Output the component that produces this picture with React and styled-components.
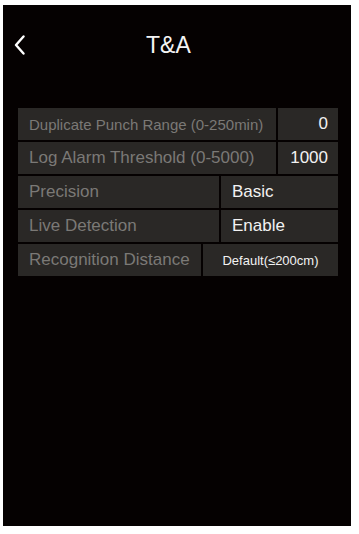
import React from "react";
import styled, { createGlobalStyle } from "styled-components";

const Global = createGlobalStyle`
  html, body {
    margin: 0;
    padding: 0;
    background: #ffffff;
  }
  body {
    font-family: "Liberation Sans", Arial, Helvetica, sans-serif;
  }
`;

const Screen = styled.div`
  margin: 5px 0 0 3px;
  width: 348px;
  height: 521px;
  background: #050101;
  display: flex;
  flex-direction: column;
`;

const Header = styled.div`
  height: 80px;
  display: flex;
  align-items: center;
  padding: 0 0 0 11px;
`;

const Back = styled.button`
  background: none;
  border: 0;
  padding: 0;
  width: 12px;
  height: 20px;
  display: flex;
  align-items: center;
  cursor: pointer;
  svg {
    width: 11px;
    height: 20px;
  }
`;

const Title = styled.h1`
  margin: 0 0 0 120px;
  font-size: 23px;
  font-weight: normal;
  color: #f4f4f4;
`;

const Table = styled.div`
  margin: 23px 0 0 15px;
  width: 320px;
  display: flex;
  flex-direction: column;
  gap: 2px;
`;

const Row = styled.div`
  display: grid;
  grid-template-columns: ${(p) => p.$label}px 1fr;
  gap: 2px;
  height: 32px;
`;

const Cell = styled.div`
  background: #2a2826;
  display: flex;
  align-items: center;
  white-space: nowrap;
  overflow: hidden;
`;

const Label = styled(Cell)`
  padding-left: 11px;
  font-size: ${(p) => p.$size || 17}px;
  color: #7b7976;
`;

const Value = styled(Cell)`
  color: #f2f2f2;
  font-size: ${(p) => (p.$small ? 13 : 17)}px;
  justify-content: ${(p) =>
    p.$align === "right" ? "flex-end" : p.$align === "center" ? "center" : "flex-start"};
  padding: ${(p) => (p.$align === "right" ? "0 10px 0 0" : p.$align === "center" ? "0" : "0 0 0 11px")};
`;

const rows = [
  { label: "Duplicate Punch Range (0-250min)", size: 15, value: "0", w: 258, align: "right" },
  { label: "Log Alarm Threshold (0-5000)", value: "1000", w: 258, align: "right" },
  { label: "Precision", value: "Basic", w: 201, align: "left" },
  { label: "Live Detection", value: "Enable", w: 201, align: "left" },
  { label: "Recognition Distance", value: "Default(≤200cm)", w: 183, align: "center", small: true },
];

export default function App() {
  return (
    <>
      <Global />
      <Screen>
        <Header>
          <Back aria-label="Back">
            <svg viewBox="0 0 11 20" fill="none">
              <path
                d="M9.5 1.5 L2 10 L9.5 18.5"
                stroke="#ffffff"
                strokeWidth="2.4"
                strokeLinecap="round"
                strokeLinejoin="round"
              />
            </svg>
          </Back>
          <Title>T&amp;A</Title>
        </Header>
        <Table>
          {rows.map((r) => (
            <Row key={r.label} $label={r.w}>
              <Label $size={r.size}>{r.label}</Label>
              <Value $align={r.align} $small={r.small}>
                {r.value}
              </Value>
            </Row>
          ))}
        </Table>
      </Screen>
    </>
  );
}
